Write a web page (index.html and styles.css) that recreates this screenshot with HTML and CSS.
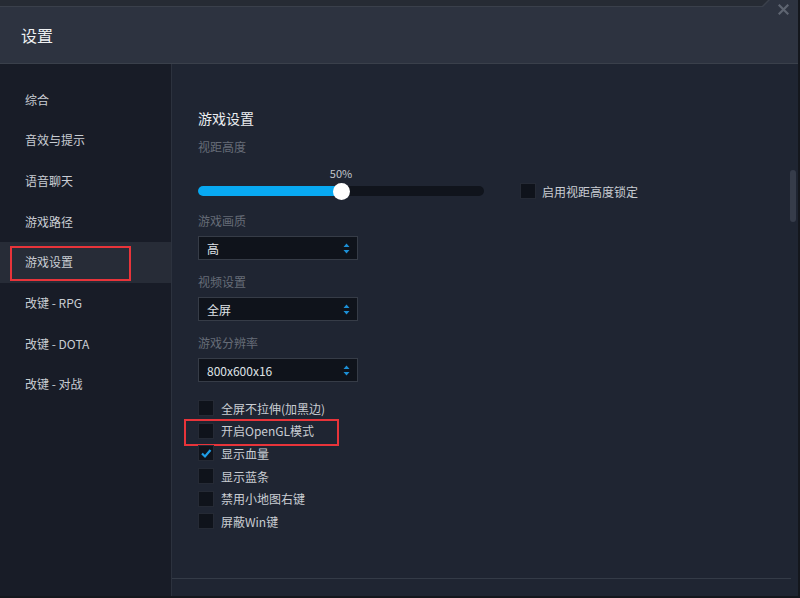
FILE: index.html
```html
<!DOCTYPE html>
<html lang="zh-CN">
<head>
    <meta charset="UTF-8">
    <title>设置</title>
    <link rel="stylesheet" href="styles.css">
</head>
<body>

<div class="window">
    <div class="topstrip"></div>
    <span class="close">
        <svg width="11" height="11" viewBox="0 0 11 11"><path d="M1.5 1.5 L9.5 9.5 M9.5 1.5 L1.5 9.5" stroke="#5e6571" stroke-width="2.2" stroke-linecap="square"/></svg>
    </span>
    <div class="header">设置</div>

    <div class="body">
        <ul class="sidebar">
            <li>综合</li>
            <li>音效与提示</li>
            <li>语音聊天</li>
            <li>游戏路径</li>
            <li class="active">游戏设置</li>
            <li>改键 - RPG</li>
            <li>改键 - DOTA</li>
            <li>改键 - 对战</li>
        </ul>

        <div class="main">
            <div class="main-body">
                <div class="content">
                    <h2>游戏设置</h2>

                    <p class="label">视距高度</p>
                    <div class="slider">
                        <div class="pct">50%</div>
                        <div class="slider-row">
                            <div class="track">
                                <div class="fill" style="width: 50%"></div>
                                <div class="knob" style="left: 50%"></div>
                            </div>
                            <label class="check lock"><span class="box"></span>启用视距高度锁定</label>
                        </div>
                    </div>

                    <p class="label gap">游戏画质</p>
                    <div class="select"><span>高</span>
                        <svg width="7" height="11" viewBox="0 0 7 11"><path d="M3.5 0.5 L6.5 4 L0.5 4 Z M0.5 7 L6.5 7 L3.5 10.5 Z" fill="#1c8fd6"/></svg>
                    </div>

                    <p class="label gap">视频设置</p>
                    <div class="select"><span>全屏</span>
                        <svg width="7" height="11" viewBox="0 0 7 11"><path d="M3.5 0.5 L6.5 4 L0.5 4 Z M0.5 7 L6.5 7 L3.5 10.5 Z" fill="#1c8fd6"/></svg>
                    </div>

                    <p class="label gap">游戏分辨率</p>
                    <div class="select"><span>800x600x16</span>
                        <svg width="7" height="11" viewBox="0 0 7 11"><path d="M3.5 0.5 L6.5 4 L0.5 4 Z M0.5 7 L6.5 7 L3.5 10.5 Z" fill="#1c8fd6"/></svg>
                    </div>

                    <div class="checks">
                        <label class="check"><span class="box"></span>全屏不拉伸(加黑边)</label>
                        <label class="check marked"><span class="box"></span>开启OpenGL模式</label>
                        <label class="check"><span class="box">
                            <svg width="14" height="14" viewBox="0 0 14 14"><path d="M3 7.5 L6 10.5 L11.5 4" fill="none" stroke="#1e9de6" stroke-width="2.2"/></svg>
                        </span>显示血量</label>
                        <label class="check"><span class="box"></span>显示蓝条</label>
                        <label class="check"><span class="box"></span>禁用小地图右键</label>
                        <label class="check"><span class="box"></span>屏蔽Win键</label>
                    </div>
                </div>
                <div class="scrollbar"><div class="thumb"></div></div>
            </div>
            <div class="footer"></div>
        </div>
    </div>
</div>

</body>
</html>
```

FILE: styles.css
```css
*, *::before, *::after {
    box-sizing: border-box;
}

body {
    margin: 0;
    background: #14171d;
    font-family: "Noto Sans CJK SC", "Noto Sans", sans-serif;
    font-size: 12px;
    color: #c9cdd3;
}

.window {
    position: relative;
    width: 800px;
    height: 598px;
    display: flex;
    flex-direction: column;
    background: #1f2532;
    border-right: 2px solid #14171d;
    border-bottom: 2px solid #14171d;
}

.topstrip {
    height: 7px;
    background: #2d3340;
    position: relative;
}

/* darker band with the bevelled end on the right */
.topstrip::before {
    content: "";
    position: absolute;
    left: 0;
    top: 0;
    width: 770px;
    height: 7px;
    background: #3a404b;
    clip-path: polygon(0 0, 100% 0, 763px 100%, 0 100%);
}

.topstrip::after {
    content: "";
    position: absolute;
    left: 0;
    top: 0;
    width: 768px;
    height: 6px;
    background: #262b34;
    clip-path: polygon(0 0, 100% 0, 762px 100%, 0 100%);
}

.close {
    position: absolute;
    right: 9px;
    top: 4px;
    line-height: 0;
}

.header {
    height: 57px;
    background: #2d3340;
    border-bottom: 1px solid #3a404b;
    padding-left: 21px;
    font-size: 16px;
    line-height: 56px;
    color: #eef0f2;
}

.body {
    flex: 1;
    display: flex;
    min-height: 0;
}

.sidebar {
    list-style: none;
    margin: 0;
    padding: 15.5px 0 0;
    width: 172px;
    background: #181c27;
    border-right: 1px solid #2c323e;
}

.sidebar li {
    position: relative;
    height: 40.7px;
    line-height: 40.7px;
    padding-left: 25px;
}

.sidebar li.active {
    background: #272c37;
}

.sidebar li.active::after {
    content: "";
    position: absolute;
    left: 10px;
    top: 4px;
    width: 121px;
    height: 35px;
    border: 2px solid #e8343a;
}

.main {
    flex: 1;
    display: flex;
    flex-direction: column;
}

.main-body {
    flex: 1;
    display: flex;
}

.content {
    flex: 1;
    padding: 44px 0 0 26px;
}

.content h2 {
    margin: 0;
    font-size: 14px;
    font-weight: normal;
    line-height: 20px;
    color: #eceef1;
}

.label {
    margin: 10px 0 0;
    line-height: 18px;
    color: #666c77;
}

.label.gap {
    margin-top: 13px;
}

.slider {
    margin-top: 10px;
}

.pct {
    width: 286px;
    text-align: center;
    font-size: 11px;
    line-height: 14px;
    color: #c2c6cc;
}

.slider-row {
    margin-top: 3px;
    height: 16px;
    display: flex;
    align-items: center;
}

.track {
    position: relative;
    width: 286px;
    height: 10px;
    border-radius: 5px;
    background: #10141c;
}

.fill {
    height: 100%;
    border-radius: 5px;
    background: #08a9f2;
}

.knob {
    position: absolute;
    top: 50%;
    width: 17px;
    height: 17px;
    margin: -8.5px 0 0 -8.5px;
    border-radius: 50%;
    background: #ffffff;
}

.select {
    margin-top: 6px;
    width: 160px;
    height: 24px;
    display: flex;
    align-items: center;
    justify-content: space-between;
    padding: 0 7px 0 8px;
    background: #0f131b;
    border: 1px solid #363c47;
    color: #dfe2e6;
}

.checks {
    margin-top: 15px;
}

.check {
    position: relative;
    display: flex;
    align-items: center;
    height: 22.6px;
}

.check .box {
    width: 16px;
    height: 16px;
    margin-right: 7px;
    background: #0f131b;
    border: 1px solid #252a35;
    display: flex;
    align-items: center;
    justify-content: center;
}

.check.lock {
    margin-left: 36px;
    height: 16px;
}

.check.lock .box {
    margin-right: 6px;
}

.check.marked::after {
    content: "";
    position: absolute;
    left: -14px;
    top: -1px;
    width: 155px;
    height: 27px;
    border: 2px solid #e8343a;
}

.scrollbar {
    width: 10px;
    padding: 106px 0 0 2px;
}

.thumb {
    width: 6px;
    height: 52px;
    border-radius: 3px;
    background: #363c4a;
}

.footer {
    height: 18px;
    margin-right: 7px;
    border-top: 1px solid #343b47;
}
```
